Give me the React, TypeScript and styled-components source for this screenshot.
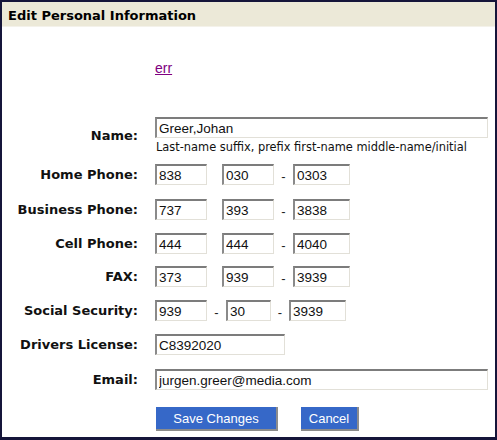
import React from "react";
import styled, { createGlobalStyle } from "styled-components";

const GlobalStyle = createGlobalStyle`
  html, body {
    margin: 0;
    padding: 0;
    background: #ffffff;
  }
`;

const Frame = styled.div`
  width: 497px;
  height: 440px;
  box-sizing: border-box;
  border: 2px solid #15153a;
  border-bottom-width: 3px;
  background: #ffffff;
  display: flex;
  flex-direction: column;
`;

const Header = styled.div`
  height: 25px;
  background: #ece9d8;
  border-bottom: 1px solid #f4f2ea;
  font-family: Verdana, "DejaVu Sans", sans-serif;
  font-weight: bold;
  font-size: 13px;
  color: #000;
  display: flex;
  align-items: center;
  padding-left: 6px;
  padding-top: 2px;
  box-sizing: border-box;
`;

const Body = styled.div`
  display: flex;
  flex-direction: column;
  padding-top: 33px;
`;

const Row = styled.div<{ $mb?: number; $center?: boolean }>`
  display: grid;
  grid-template-columns: 136px 1fr;
  column-gap: 17px;
  align-items: ${(p) => (p.$center ? "center" : "start")};
  margin-bottom: ${(p) => p.$mb ?? 13}px;
`;

const Label = styled.label`
  font-family: Verdana, "DejaVu Sans", sans-serif;
  font-weight: bold;
  font-size: 13px;
  color: #111;
  text-align: right;
  line-height: 21px;
  white-space: nowrap;
`;

const ErrLink = styled.a`
  font-family: Arial, "Liberation Sans", sans-serif;
  font-size: 14px;
  color: #800080;
  text-decoration: underline;
  line-height: 16px;
`;

const Field = styled.div`
  display: flex;
  flex-direction: column;
`;

const Inline = styled.div`
  display: flex;
  align-items: center;
`;

const Input = styled.input<{ $w: number }>`
  width: ${(p) => p.$w}px;
  height: 21px;
  box-sizing: border-box;
  border-top: 2px solid #7c7c7c;
  border-left: 2px solid #8a8a8a;
  border-right: 1px solid #e2e0d8;
  border-bottom: 1px solid #e2e0d8;
  padding: 0 2px;
  margin: 0;
  font-family: Arial, "Liberation Sans", sans-serif;
  font-size: 13.5px;
  color: #111;
  background: #fff;
  outline: none;
`;

const Gap = styled.span<{ $w: number }>`
  display: inline-block;
  width: ${(p) => p.$w}px;
`;

const Dash = styled.span<{ $w: number }>`
  display: inline-block;
  width: ${(p) => p.$w}px;
  text-align: center;
  font-family: Arial, "Liberation Sans", sans-serif;
  font-size: 13px;
  padding-top: 3px;
  color: #222;
`;

const Hint = styled.div`
  font-family: Verdana, "DejaVu Sans", sans-serif;
  font-size: 11.4px;
  color: #111;
  margin-top: 2px;
  padding-left: 1px;
  line-height: 14px;
  white-space: nowrap;
`;

const Buttons = styled.div`
  display: flex;
  gap: 23px;
  padding-left: 154px;
  margin-top: 4px;
`;

const Button = styled.button<{ $w: number }>`
  width: ${(p) => p.$w}px;
  height: 24px;
  box-sizing: border-box;
  background: #3668c8;
  border: none;
  border-right: 2px solid #8c8c8c;
  border-bottom: 2px solid #8c8c8c;
  color: #fff;
  font-family: Arial, "Liberation Sans", sans-serif;
  font-size: 13px;
  padding: 0;
  cursor: pointer;
`;

const Phone = ({ a, b, c }: { a: string; b: string; c: string }) => (
  <Inline>
    <Input $w={52} defaultValue={a} />
    <Gap $w={15} />
    <Input $w={52} defaultValue={b} />
    <Dash $w={19}>-</Dash>
    <Input $w={57} defaultValue={c} />
  </Inline>
);

export default function App() {
  return (
    <>
      <GlobalStyle />
      <Frame>
        <Header>Edit Personal Information</Header>
        <Body>
          <Row $mb={41}>
            <span />
            <ErrLink href="#">err</ErrLink>
          </Row>
          <Row $mb={10} $center>
            <Label>Name:</Label>
            <Field>
              <Input $w={333} defaultValue="Greer,Johan" />
              <Hint>Last-name suffix, prefix first-name middle-name/initial</Hint>
            </Field>
          </Row>
          <Row $mb={14}>
            <Label>Home Phone:</Label>
            <Phone a="838" b="030" c="0303" />
          </Row>
          <Row $mb={13}>
            <Label>Business Phone:</Label>
            <Phone a="737" b="393" c="3838" />
          </Row>
          <Row $mb={12}>
            <Label>Cell Phone:</Label>
            <Phone a="444" b="444" c="4040" />
          </Row>
          <Row $mb={13}>
            <Label>FAX:</Label>
            <Phone a="373" b="939" c="3939" />
          </Row>
          <Row $mb={13}>
            <Label>Social Security:</Label>
            <Inline>
              <Input $w={52} defaultValue="939" />
              <Dash $w={19}>-</Dash>
              <Input $w={45} defaultValue="30" />
              <Dash $w={18}>-</Dash>
              <Input $w={57} defaultValue="3939" />
            </Inline>
          </Row>
          <Row $mb={14}>
            <Label>Drivers License:</Label>
            <Inline>
              <Input $w={130} defaultValue="C8392020" />
            </Inline>
          </Row>
          <Row $mb={13}>
            <Label>Email:</Label>
            <Inline>
              <Input $w={333} defaultValue="jurgen.greer@media.com" />
            </Inline>
          </Row>
          <Buttons>
            <Button $w={122}>Save Changes</Button>
            <Button $w={58}>Cancel</Button>
          </Buttons>
        </Body>
      </Frame>
    </>
  );
}
